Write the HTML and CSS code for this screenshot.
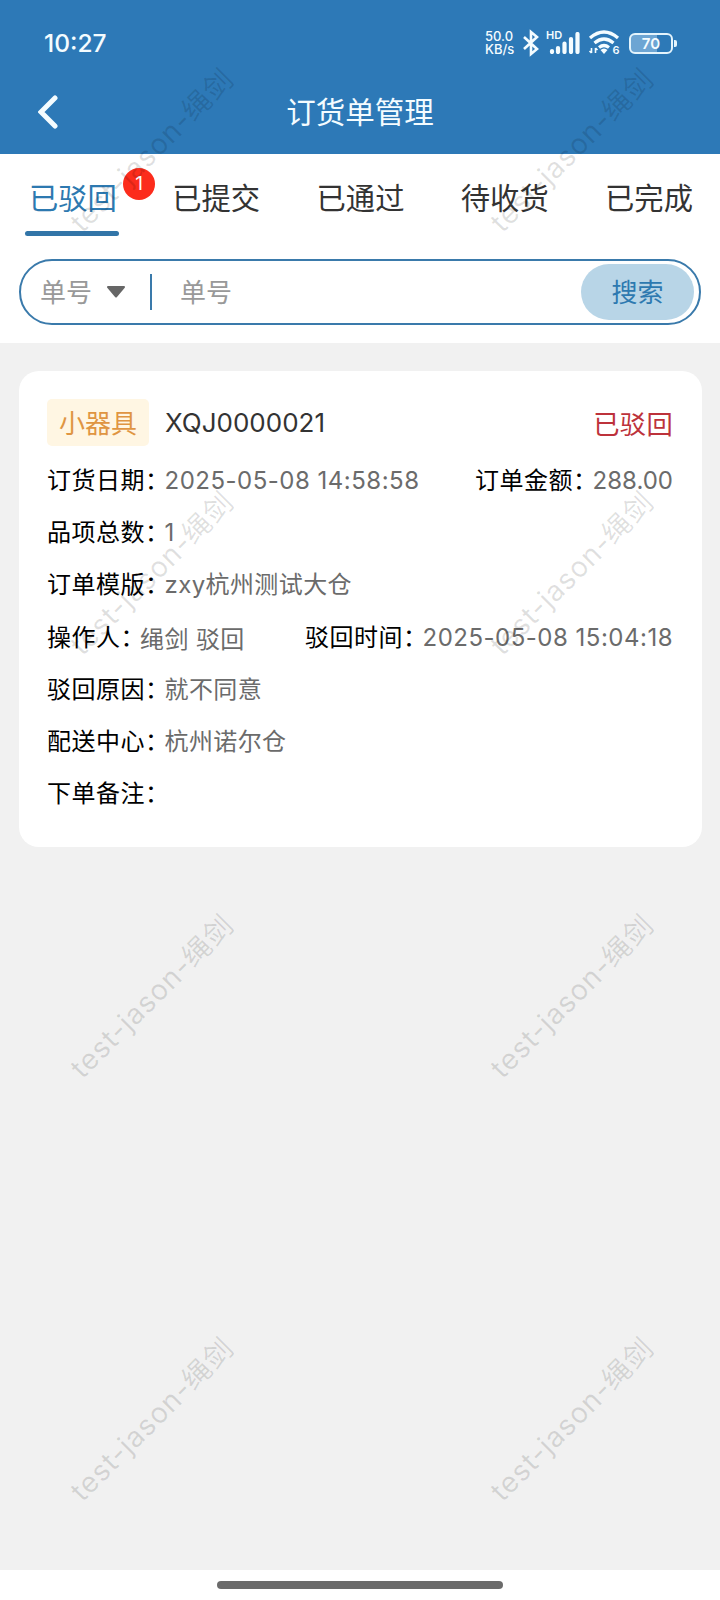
FILE: index.html
```html
<!DOCTYPE html>
<html lang="zh-CN">

<head>
    <meta charset="UTF-8">
    <meta name="viewport" content="width=device-width, initial-scale=1.0">
    <title>订货单管理</title>
    <link rel="stylesheet" href="styles.css">
</head>

<body>
    <div class="page">
        <header class="header">
            <div class="status-bar">
                <span class="time">10:27</span>
                <div class="status-icons">
                    <div class="speed">
                        <span>50.0</span>
                        <span>KB/s</span>
                    </div>
                    <svg class="bluetooth" width="18" height="28" viewBox="0 0 18 28">
                        <path d="M2 8L15 20L9 25V3L15 8L2 20" />
                    </svg>
                    <div class="signal">
                        <span class="hd">HD</span>
                        <svg width="33" height="22" viewBox="0 0 33 22">
                            <path d="M4 20V19M10 20V16M16.500 20V11.500M23 20V7M29.500 20V2" />
                        </svg>
                    </div>
                    <svg class="wifi" width="34" height="28" viewBox="0 0 34 28">
                        <path class="arc" d="M2 9Q16 -3 30 9M6.500 14Q16 6 25.500 14M11 18.500Q16 14.500 21 18.500" />
                        <path class="dot" d="M12.500 21Q16 18 19.500 21L16 25Z" />
                        <path class="arrows" d="M3.500 19V24M1.500 22L3.500 24M7.500 24V19M9.500 21L7.500 19" />
                        <text x="24.500" y="25">6</text>
                    </svg>
                    <div class="battery">
                        <div class="battery-body">70</div>
                        <div class="battery-tip"></div>
                    </div>
                </div>
            </div>
            <div class="nav-bar">
                <svg class="back" width="22" height="36" viewBox="0 0 22 36">
                    <path d="M17 4L3 18L17 32" />
                </svg>
                <h1 class="title">订货单管理</h1>
            </div>
        </header>

        <div class="filter">
            <nav class="tabs">
                <div class="tab active">已驳回<span class="badge">1</span></div>
                <div class="tab">已提交</div>
                <div class="tab">已通过</div>
                <div class="tab">待收货</div>
                <div class="tab">已完成</div>
            </nav>
            <div class="search">
                <span class="search-type">单号</span>
                <svg class="arrow" width="20" height="13" viewBox="0 0 20 13">
                    <path d="M2 1H18L10 10.500Z" />
                </svg>
                <span class="divider"></span>
                <span class="search-input">单号</span>
                <div class="search-btn">搜索</div>
            </div>
        </div>

        <main class="content">
            <div class="card">
                <div class="card-head">
                    <span class="tag">小器具</span>
                    <span class="order-no">XQJ0000021</span>
                    <span class="state">已驳回</span>
                </div>
                <div class="row">
                    <div><span class="label">订货日期：</span><span class="value date">2025-05-08 14:58:58</span></div>
                    <div><span class="label">订单金额：</span><span class="value amount">288.00</span></div>
                </div>
                <div class="row">
                    <div><span class="label">品项总数：</span><span class="value">1</span></div>
                </div>
                <div class="row">
                    <div><span class="label">订单模版：</span><span class="value">zxy杭州测试大仓</span></div>
                </div>
                <div class="row">
                    <div class="operator"><span class="label">操作人：</span><span class="value">绳剑 驳回</span></div>
                    <div><span class="label">驳回时间：</span><span class="value date">2025-05-08 15:04:18</span></div>
                </div>
                <div class="row">
                    <div><span class="label">驳回原因：</span><span class="value">就不同意</span></div>
                </div>
                <div class="row">
                    <div><span class="label">配送中心：</span><span class="value">杭州诺尔仓</span></div>
                </div>
                <div class="row">
                    <div><span class="label">下单备注：</span></div>
                </div>
            </div>
        </main>

        <footer class="home">
            <div class="home-bar"></div>
        </footer>

        <div class="watermark">
            <span>test-jason-绳剑</span>
            <span>test-jason-绳剑</span>
            <span>test-jason-绳剑</span>
            <span>test-jason-绳剑</span>
            <span>test-jason-绳剑</span>
            <span>test-jason-绳剑</span>
            <span>test-jason-绳剑</span>
            <span>test-jason-绳剑</span>
        </div>
    </div>
</body>

</html>
```
FILE: styles.css
```css
* {
    box-sizing: border-box;
}

body {
    margin: 0;
    font-family: Inter, "Noto Sans CJK SC", sans-serif;
    color: #333;
}

.page {
    position: relative;
    display: flex;
    flex-direction: column;
    width: 720px;
    height: 1600px;
    overflow: hidden;
    background-color: #f1f1f1;
}

/* header */
.header {
    height: 154px;
    background-color: #2d79b7;
    color: #f4fcff;
}

.status-bar {
    display: flex;
    align-items: center;
    justify-content: space-between;
    height: 70px;
    padding: 16px 43px 0 44px;
}

.time {
    font-size: 24.5px;
    font-weight: 500;
    line-height: 30px;
}

.status-icons {
    display: flex;
    align-items: center;
}

.speed {
    display: flex;
    flex-direction: column;
    width: 30px;
    font-size: 13px;
    font-weight: 500;
    line-height: 13px;
}

.bluetooth {
    margin-left: 7px;
    fill: none;
    stroke: #f4fcff;
    stroke-width: 2.6;
}

.signal {
    position: relative;
    display: flex;
    width: 35px;
    margin-left: 6px;
    padding-left: 2px;
}

.signal svg {
    fill: none;
    stroke: #f4fcff;
    stroke-width: 4.2;
    stroke-linecap: round;
}

.hd {
    position: absolute;
    top: -3px;
    left: 0;
    font-size: 11px;
    font-weight: 600;
    line-height: 12px;
}

.wifi {
    margin-left: 7px;
}

.wifi .arc {
    fill: none;
    stroke: #f4fcff;
    stroke-width: 3.2;
}

.wifi .dot {
    fill: #f4fcff;
}

.wifi .arrows {
    fill: none;
    stroke: #f4fcff;
    stroke-width: 1.6;
}

.wifi text {
    fill: #f4fcff;
    font-size: 11px;
    font-weight: 600;
}

.battery {
    display: flex;
    align-items: center;
    margin-left: 7px;
}

.battery-body {
    width: 44px;
    height: 21px;
    border: 2px solid #e4f4fc;
    border-radius: 6px;
    background: linear-gradient(to right, #6da5d3 65%, #2d79b7 65%);
    font-size: 15px;
    font-weight: 600;
    line-height: 17px;
    text-align: center;
}

.battery-tip {
    width: 3px;
    height: 7px;
    margin-left: 1px;
    border-radius: 0 2px 2px 0;
    background-color: #e4f4fc;
}

.nav-bar {
    display: flex;
    align-items: center;
    height: 84px;
    padding: 0 38px;
}

.back {
    fill: none;
    stroke: #f4fcff;
    stroke-width: 5;
    stroke-linecap: round;
}

.title {
    flex: 1;
    margin: 0 22px 0 0;
    font-size: 29.5px;
    font-weight: 400;
    line-height: 40px;
    text-align: center;
}

/* tabs and search */
.filter {
    height: 189px;
    padding: 0 19px;
    background-color: #fff;
}

.tabs {
    display: flex;
    justify-content: space-between;
    height: 83px;
    margin: 0 4px 0 6px;
}

.tab {
    position: relative;
    padding: 24px 4px 0;
    font-size: 29.3px;
    line-height: 42px;
    white-space: nowrap;
}

.active {
    padding-right: 3px;
    color: #2d79b0;
}

.active::after {
    content: "";
    position: absolute;
    left: 0;
    bottom: 1px;
    width: 94px;
    height: 5px;
    border-radius: 3px;
    background-color: #3275a8;
}

.badge {
    position: absolute;
    top: 14px;
    left: 98px;
    width: 32px;
    height: 32px;
    border-radius: 50%;
    background-color: #fc2c1c;
    color: #fff;
    font-size: 19px;
    line-height: 32px;
    text-align: center;
}

.search {
    display: flex;
    align-items: center;
    height: 66px;
    margin-top: 22px;
    padding: 0 5px 0 19px;
    border: 2px solid #3a7aab;
    border-radius: 33px;
    color: #999;
    font-size: 26px;
}

.search-type,
.search-input {
    padding-bottom: 3px;
}

.arrow {
    margin-left: 14px;
    fill: #666;
    stroke: #666;
    stroke-width: 2;
    stroke-linejoin: round;
}

.divider {
    width: 2px;
    height: 36px;
    margin-left: 24px;
    background-color: #3a7aab;
}

.search-input {
    flex: 1;
    margin-left: 28px;
}

.search-btn {
    width: 113px;
    height: 56px;
    border-radius: 28px;
    background-color: #b8d5e7;
    color: #2d79b0;
    line-height: 57px;
    text-align: center;
}

/* order card */
.content {
    flex: 1;
    padding: 28px 18px 0 19px;
}

.card {
    height: 476px;
    padding: 28px 29px 0 28px;
    border-radius: 20px;
    background-color: #fff;
}

.card-head {
    display: flex;
    align-items: center;
    height: 47px;
    margin-bottom: 9px;
    font-size: 26.3px;
}

.tag {
    width: 102px;
    height: 47px;
    border-radius: 5px;
    background-color: #fff6e3;
    color: #df9542;
    font-size: 26px;
    line-height: 49px;
    text-align: center;
}

.order-no {
    flex: 1;
    margin-left: 16px;
    font-size: 26px;
}

.state {
    color: #bd323b;
    letter-spacing: 0.3px;
}

.row {
    display: flex;
    justify-content: space-between;
    height: 52.2px;
    font-size: 24px;
    line-height: 52px;
    white-space: nowrap;
}

/* halt: half-width full stop and colon */
.label {
    margin-right: 7px;
    color: #000;
    font-feature-settings: "halt";
    letter-spacing: 0.5px;
}

.value {
    color: #6b6b6b;
    letter-spacing: 0.4px;
}

.date {
    letter-spacing: 0.5px;
}

.amount {
    letter-spacing: 0;
}

.operator .value {
    position: relative;
    top: 2px;
}

/* gesture bar */
.home {
    display: flex;
    justify-content: center;
    height: 30px;
    padding-top: 11px;
    background-color: #fff;
}

.home-bar {
    width: 286px;
    height: 8px;
    border-radius: 4px;
    background-color: #6b6b6b;
}

.watermark {
    position: absolute;
    top: -63px;
    left: -60px;
    display: grid;
    grid-template-columns: 420px 420px;
    grid-auto-rows: 423px;
    place-items: center;
    color: rgba(0, 0, 0, 0.12);
    font-size: 28.5px;
    letter-spacing: 0.9px;
    pointer-events: none;
}

.watermark span {
    transform: rotate(-45deg);
    white-space: nowrap;
}
```
